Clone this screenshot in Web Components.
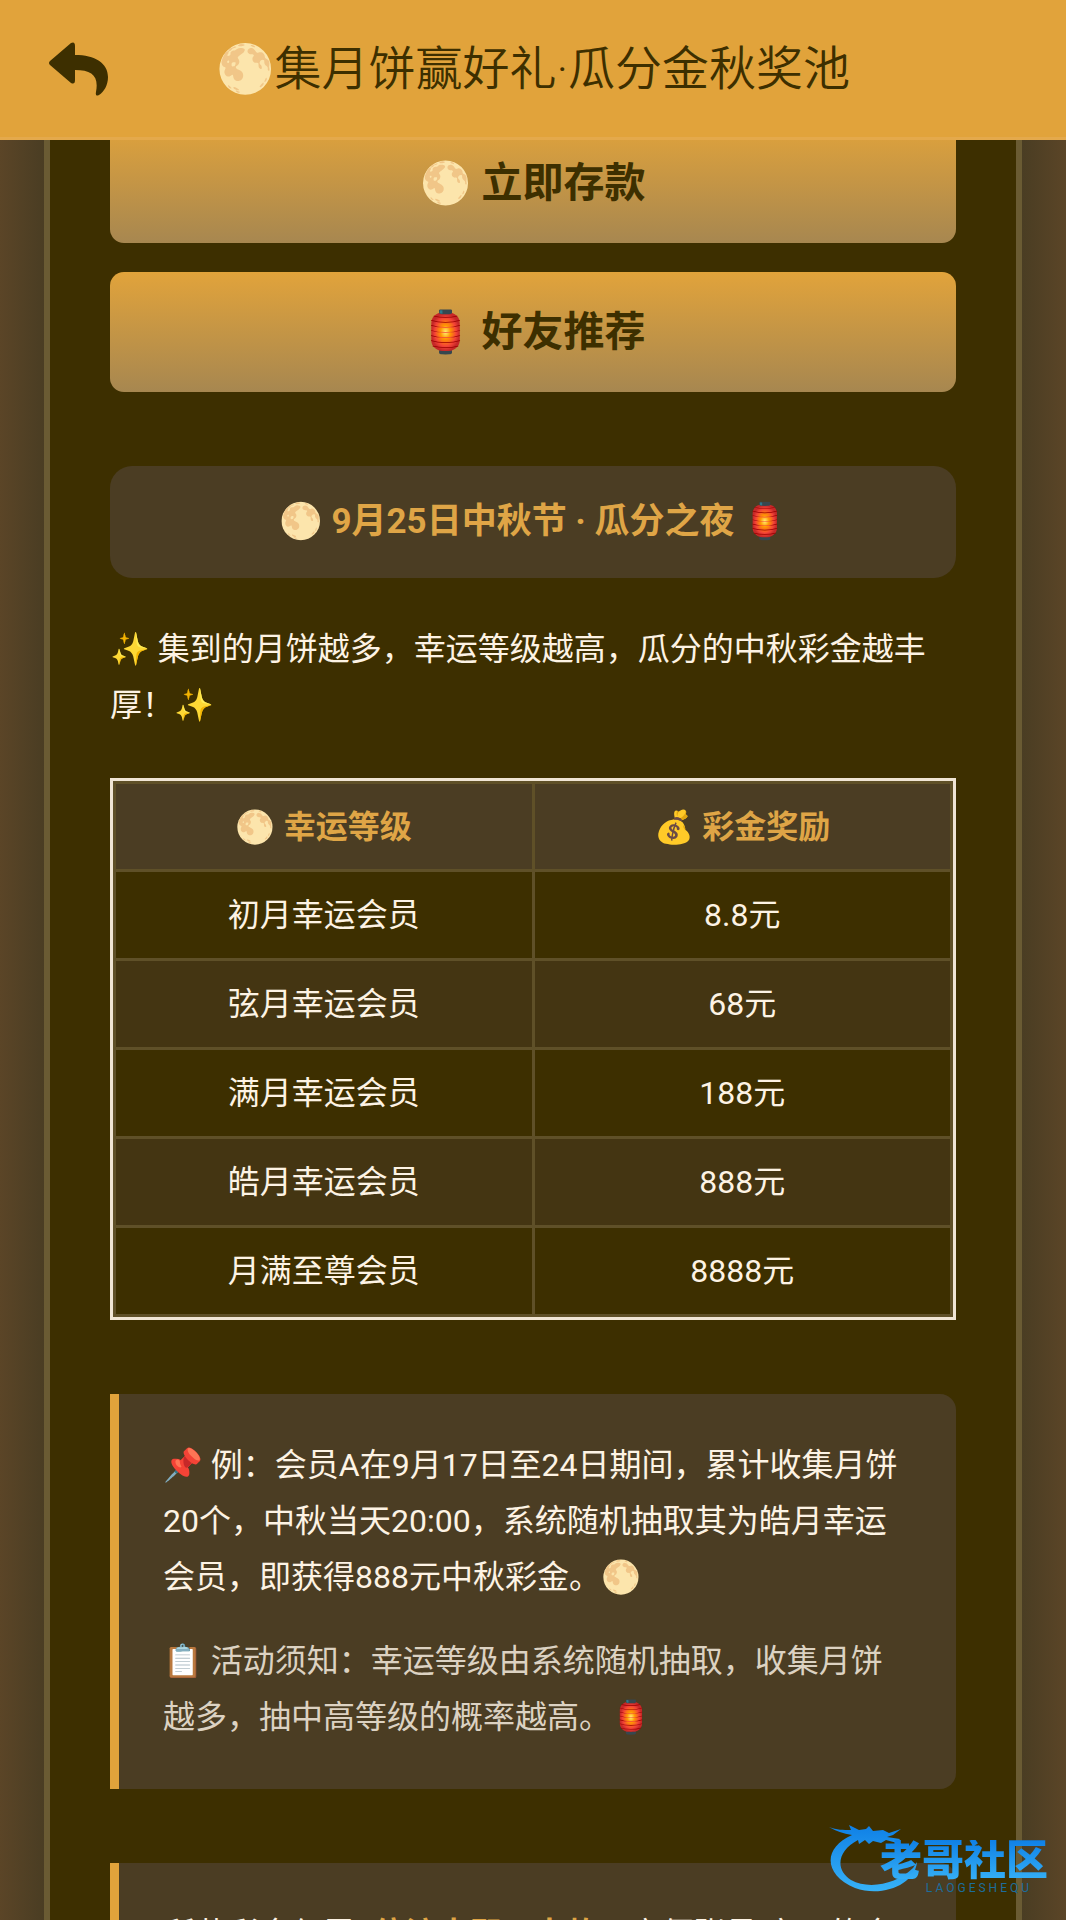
<!DOCTYPE html>
<html lang="zh-CN">
<head>
<meta charset="utf-8">
<title>集月饼赢好礼·瓜分金秋奖池</title>
<style>
  :root {
    --gold: #e1a33b;
    --dark: #3d2f00;
    --card: #4b3d23;
    --line: #6a5b33;
    --cream: #fdf3e4;
  }
  html, body { margin: 0; height: 100%; overflow: hidden; }
  body {
    background: var(--dark);
    color: var(--cream);
    font-family: Roboto, "Noto Sans CJK SC", "Noto Color Emoji", sans-serif;
    font-size: 32px;
    line-height: 56px;
  }
  promo-note b { color: #dfa546; font-weight: 700; }
</style>
</head>
<body>
<promo-page>
  <promo-header slot="header">🌕集月饼赢好礼·瓜分金秋奖池</promo-header>
  <promo-button>🌕 立即存款</promo-button>
  <promo-button>🏮 好友推荐</promo-button>
  <promo-banner>🌕 9月25日中秋节 · 瓜分之夜 🏮</promo-banner>
  <promo-lead>✨ 集到的月饼越多，幸运等级越高，瓜分的中秋彩金越丰厚！✨</promo-lead>
  <reward-table></reward-table>
  <promo-note>
    <p>📌 例：会员A在9月17日至24日期间，累计收集月饼20个，中秋当天20:00，系统随机抽取其为皓月幸运会员，即获得888元中秋彩金。🌕</p>
    <p class="dim">📋 活动须知：幸运等级由系统随机抽取，收集月饼越多，抽中高等级的概率越高。🏮</p>
  </promo-note>
  <promo-note>
    <p>所获彩金仅需<b>1倍流水即可出款</b>，方便账号 实现的金</p>
  </promo-note>
  <site-mark slot="mark"></site-mark>
</promo-page>

<script>
class Base extends HTMLElement {
  connectedCallback() {
    if (this.shadowRoot) return;
    const t = document.createElement('template');
    t.innerHTML = this.constructor.html;
    this.attachShadow({ mode: 'open' }).append(t.content.cloneNode(true));
  }
}

customElements.define('promo-page', class extends Base {
  static html = `
  <style>
    :host { display: flex; flex-direction: column; height: 100vh; overflow: hidden; position: relative;
      background: linear-gradient(90deg, #5b4527 0, #4a3d23 44px, #4a3d23 calc(100% - 44px), #5b4527 100%); }
    main { flex: 1; min-height: 0; overflow: hidden; margin: 0 44px; padding: 0 60px;
      border: solid var(--line); border-width: 0 6px; background: var(--dark); }
    .scroll { display: flex; flex-direction: column; margin-top: -17px; }
  </style>
  <slot name="header"></slot>
  <main><div class="scroll"><slot></slot></div></main>
  <slot name="mark"></slot>`;
});

customElements.define('promo-header', class extends Base {
  static html = `
  <style>
    :host { display: block; position: relative; z-index: 1; }
    header { display: grid; grid-template-columns: 60px 1fr 60px; align-items: center; height: 137px;
      padding: 0 49px; background: var(--gold); border-bottom: 3px solid #e4a94c; color: var(--dark); }
    button { all: unset; display: block; cursor: pointer; }
    svg { display: block; width: 60px; height: 54px; }
    h1 { margin: 0; text-align: center; font-size: 47px; line-height: 60px; font-weight: 350; white-space: nowrap; }
  </style>
  <header>
    <button type="button" aria-label="返回">
      <svg viewBox="0 0 60 54" fill="currentColor"><path d="M1 19 22 1Q26-1 26 4V13C46 13 59 21 59 35C59 43 55 50 50 53Q46 55 47 50C50 34 43 28 26 28V38Q26 43 22 41L1 23Q-1 21 1 19Z"/></svg>
    </button>
    <h1><slot></slot></h1>
  </header>`;
});

customElements.define('promo-button', class extends Base {
  static html = `
  <style>
    :host { display: block; margin-bottom: 29px; }
    button { display: block; width: 100%; height: 120px; border: 0; border-radius: 14px; padding: 0; cursor: pointer;
      background: linear-gradient(#e1a33b, #a78750); color: var(--dark);
      font: 700 41px/60px Roboto, "Noto Sans CJK SC", "Noto Color Emoji", sans-serif; }
  </style>
  <button type="button"><slot></slot></button>`;
});

customElements.define('promo-banner', class extends Base {
  static html = `
  <style>
    :host { display: block; margin-top: 45px; padding: 28px 0; border-radius: 22px; background: var(--card); }
    h2 { margin: 0; text-align: center; font-size: 35px; line-height: 56px; font-weight: 700; color: #dfa546; }
  </style>
  <h2><slot></slot></h2>`;
});

customElements.define('promo-lead', class extends Base {
  static html = `
  <style>
    :host { display: block; margin: 43px 0 45px; }
    p { margin: 0; }
  </style>
  <p><slot></slot></p>`;
});

customElements.define('reward-table', class extends Base {
  static html = `
  <style>
    :host { display: block; border: 3px solid #f0e5d5; }
    table { width: 100%; border-collapse: collapse; table-layout: fixed; text-align: center; }
    th, td { height: 89px; box-sizing: border-box; padding: 0; border: 3px solid #5f5028; }
    th { height: 88px; background: var(--card); color: #dfa546; font-weight: 700; }
    tbody tr:nth-child(even) { background: #443512; }
  </style>
  <table>
    <thead><tr><th scope="col">🌕 幸运等级</th><th scope="col">💰 彩金奖励</th></tr></thead>
    <tbody>
      <tr><td>初月幸运会员</td><td>8.8元</td></tr>
      <tr><td>弦月幸运会员</td><td>68元</td></tr>
      <tr><td>满月幸运会员</td><td>188元</td></tr>
      <tr><td>皓月幸运会员</td><td>888元</td></tr>
      <tr><td>月满至尊会员</td><td>8888元</td></tr>
    </tbody>
  </table>`;
});

customElements.define('promo-note', class extends Base {
  static html = `
  <style>
    :host { display: block; margin-top: 74px; padding: 43px 44px 44px; border-left: 9px solid var(--gold);
      border-radius: 0 16px 16px 0; background: var(--card); }
    div { display: flex; flex-direction: column; gap: 28px; }
    ::slotted(p) { margin: 0; }
    ::slotted(.dim) { color: #dcd2c2; }
  </style>
  <div><slot></slot></div>`;
});

customElements.define('site-mark', class extends Base {
  static html = `
  <style>
    :host { position: absolute; right: 18px; bottom: 26px; display: flex; align-items: flex-end; }
    svg { width: 90px; height: 70px; margin-right: -39px; }
    div { display: flex; flex-direction: column; align-items: flex-end; }
    b { position: relative; font-size: 42px; line-height: 42px; font-weight: 900; color: transparent;
      background: linear-gradient(#0f80e6, #37b2f7); background-clip: text; -webkit-background-clip: text; }
    span { padding-right: 16px; font-size: 12px; line-height: 12px; letter-spacing: 3px; color: #1c6d9c; }
  </style>
  <svg viewBox="0 0 90 70" aria-hidden="true">
    <defs><linearGradient id="g" x2="0" y2="1"><stop stop-color="#0f80e6"/><stop offset="1" stop-color="#37b2f7"/></linearGradient></defs>
    <path fill="url(#g)" d="M0 3C8 6 14 6 22 6L20 1 30 6 37 5 40 2 44 7 54 6 60 9 72 5 64 11 58 13 71 15 68 19 57 16 52 19 44 17 40 20 36 16 30 20 29 16C8 27 6 46 22 56 40 66 68 60 84 44L88 38C86 60 54 74 26 64-6 50-6 24 23 11Q10 9 0 3Z"/>
  </svg>
  <div><b>老哥社区</b><span>LAOGESHEQU</span></div>`;
});
</script>
</body>
</html>
